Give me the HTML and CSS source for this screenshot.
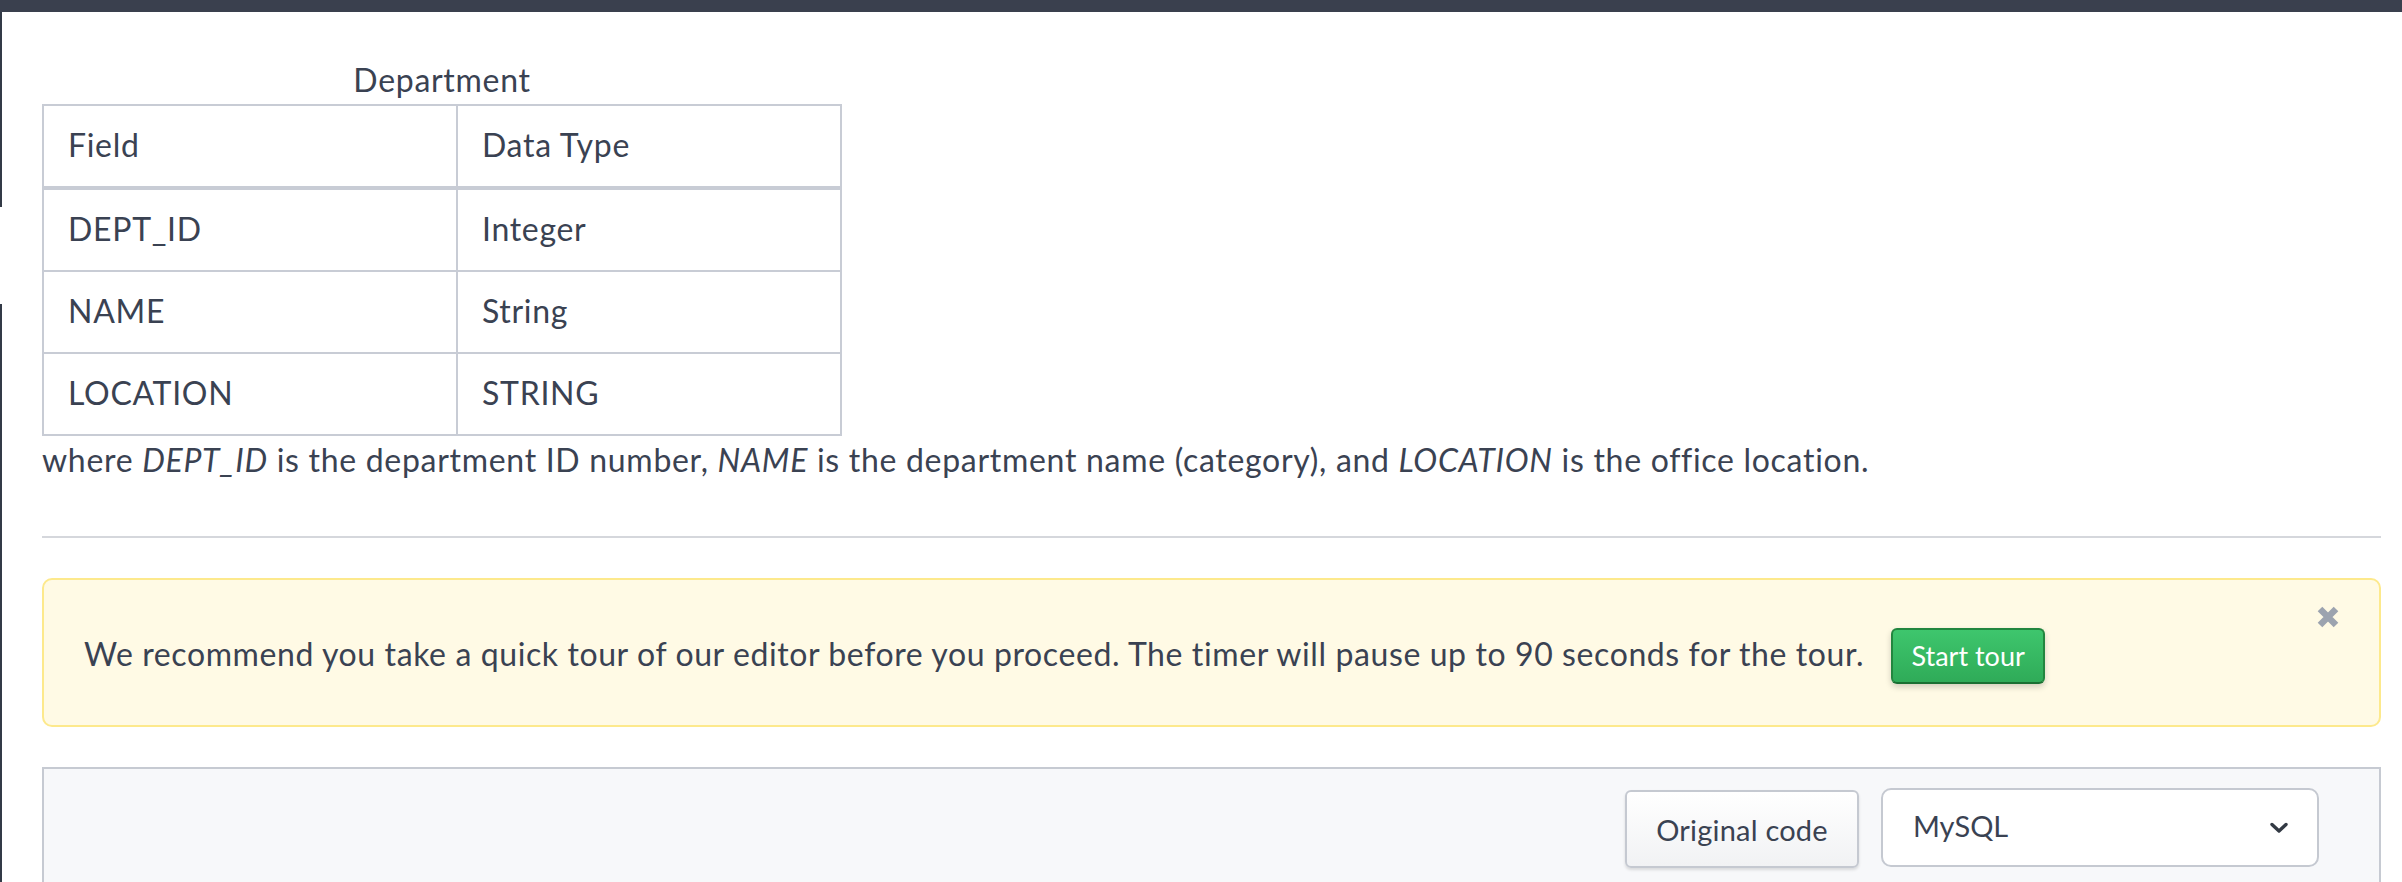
FILE: index.html
```html
<!DOCTYPE html>
<html lang="en">
<head>
<meta charset="utf-8">
<title>Department</title>
<link rel="stylesheet" href="styles.css">
</head>
<body>
<div class="topbar"></div>
<div class="page">
  <div class="rail">
    <span class="rail-seg rail-top"></span>
    <span class="rail-gap"></span>
    <span class="rail-seg rail-rest"></span>
  </div>
  <main class="content">
    <table class="schema">
      <caption>Department</caption>
      <thead>
        <tr><th class="col-field">Field</th><th>Data Type</th></tr>
      </thead>
      <tbody>
        <tr><td>DEPT_ID</td><td>Integer</td></tr>
        <tr><td>NAME</td><td>String</td></tr>
        <tr><td>LOCATION</td><td>STRING</td></tr>
      </tbody>
    </table>
    <p class="desc">where <em>DEPT_ID</em> is the department ID number, <em>NAME</em> is the department name (category), and <em>LOCATION</em> is the office location.</p>
    <hr class="divider">
    <div class="alert">
      <p class="alert-text">We recommend you take a quick tour of our editor before you proceed. The timer will pause up to 90 seconds for the tour.<button class="btn-tour" type="button">Start tour</button></p>
      <button class="alert-close" type="button" aria-label="Close">
        <svg width="22" height="22" viewBox="0 0 22 22"><path d="M3 3 L19 19 M19 3 L3 19" fill="none" stroke="#9ca3af" stroke-width="6.5" stroke-linecap="butt"/></svg>
      </button>
    </div>
    <div class="editor">
      <div class="toolbar">
        <button class="btn-orig" type="button">Original code</button>
        <div class="select">
          <span class="select-value">MySQL</span>
          <svg class="chevron" width="18" height="12" viewBox="0 0 18 12"><path d="M2 2.5 L9 9 L16 2.5" fill="none" stroke="#333a44" stroke-width="3.4" stroke-linecap="round" stroke-linejoin="round"/></svg>
        </div>
      </div>
    </div>
  </main>
</div>
</body>
</html>
```
FILE: styles.css
```css
* { box-sizing: border-box; }

html, body {
  margin: 0;
  padding: 0;
  background: #ffffff;
  overflow: hidden;
}

body {
  font-family: Lato, "Noto Sans", sans-serif;
  font-size: 32px;
  line-height: 48px;
  letter-spacing: 0.7px;
  color: #3a4252;
  height: 882px;
}

.topbar {
  height: 12px;
  background: #3a404e;
}

.page {
  display: flex;
  height: 870px;
}

.rail {
  width: 2px;
  display: flex;
  flex-direction: column;
  flex: none;
}

.rail-seg { display: block; background: #333a47; }
.rail-top { height: 195px; }
.rail-gap { height: 97px; }
.rail-rest { flex: 1; }

.content {
  flex: 1;
  padding: 44px 21px 0 40px;
  min-width: 0;
}

.schema {
  border-collapse: collapse;
  width: 800px;
}

.schema caption {
  text-align: center;
  line-height: 48px;
  padding: 0;
}

.schema th,
.schema td {
  text-align: left;
  font-weight: 400;
  padding: 15px 24px 17px;
  border: 2px solid #c8ccd5;
  height: 82px;
}

.schema th {
  border-bottom-width: 4px;
}

.col-field { width: 414px; }

.desc {
  margin: 0;
}

.desc em { font-style: italic; }

.divider {
  border: 0;
  height: 2px;
  background: #d5d7dc;
  margin: 52px 0 40px;
}

.alert {
  display: flex;
  align-items: flex-start;
  background: #fffae5;
  border: 2px solid #fde98c;
  border-radius: 10px;
  padding: 0 40px 0 40px;
  height: 149px;
}

.alert-text {
  flex: 1;
  margin: 0;
  height: 145px;
  display: flex;
  align-items: center;
  white-space: nowrap;
  padding-top: 2px;
  letter-spacing: 0.6px;
}

.btn-tour {
  font-family: inherit;
  font-size: 27px;
  line-height: 36px;
  letter-spacing: 0;
  color: #ffffff;
  margin-left: 27px;
  margin-top: 4px;
  width: 154px;
  height: 56px;
  padding: 0;
  border: 2px solid #22863f;
  border-bottom-color: #1a6f32;
  border-radius: 6px;
  background: linear-gradient(#3ec66d, #2fab58);
  box-shadow: 0 3px 6px rgba(0, 0, 0, 0.18);
}

.alert-close {
  margin-top: 26px;
  padding: 0;
  border: 0;
  background: none;
  line-height: 0;
}

.alert-close svg { display: block; }

.editor {
  margin-top: 40px;
  background: #f7f8fa;
  border: 2px solid #c6cad2;
  height: 400px;
}

.toolbar {
  display: flex;
  justify-content: flex-end;
  align-items: center;
  gap: 22px;
  padding: 18px 60px 0 0;
}

.btn-orig {
  font-family: inherit;
  font-size: 29px;
  letter-spacing: 0.2px;
  color: #3a4252;
  width: 234px;
  height: 78px;
  padding: 0;
  margin-top: 3px;
  border: 2px solid #c5c9d1;
  border-radius: 6px;
  background: linear-gradient(#ffffff, #f1f2f4);
  box-shadow: 0 2px 3px rgba(0, 0, 0, 0.12);
}

.select {
  width: 438px;
  height: 79px;
  background: #ffffff;
  border: 2px solid #c5c9d1;
  border-radius: 10px;
  display: flex;
  align-items: center;
  justify-content: space-between;
  padding: 0 29px 0 30px;
  font-size: 29px;
  letter-spacing: 0;
}

.select-value { line-height: 40px; padding-bottom: 4px; }

.chevron { display: block; }
```
